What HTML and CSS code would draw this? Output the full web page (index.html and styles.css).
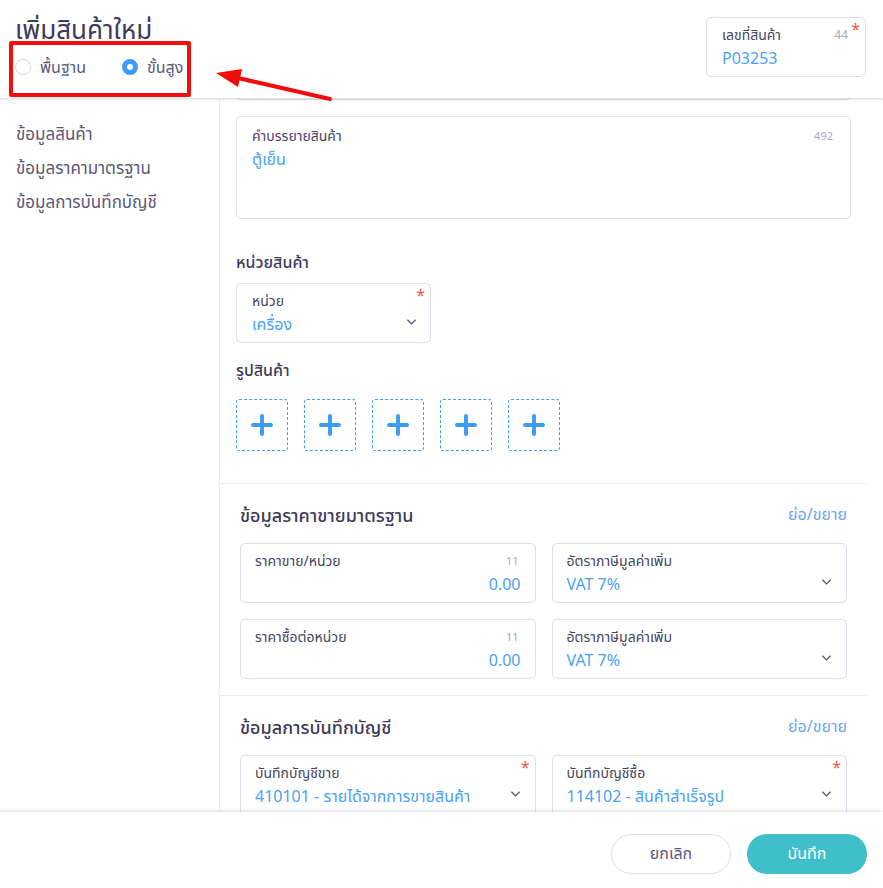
FILE: index.html
```html
<!DOCTYPE html>
<html lang="th">
<head>
<meta charset="utf-8">
<title>เพิ่มสินค้าใหม่</title>
<link rel="stylesheet" href="styles.css">
</head>
<body>
<div class="app">
  <header class="top">
    <div class="top-left">
      <h1 class="title">เพิ่มสินค้าใหม่</h1>
      <div class="radios">
        <label class="radio"><span class="dot"></span>พื้นฐาน</label>
        <label class="radio on"><span class="dot"></span>ขั้นสูง</label>
      </div>
    </div>
    <div class="field code-field">
      <div class="f-label">เลขที่สินค้า</div>
      <div class="f-value">P03253</div>
      <span class="count">44</span>
      <span class="req">*</span>
    </div>
  </header>

  <div class="body">
    <nav class="side">
      <a class="side-link">ข้อมูลสินค้า</a>
      <a class="side-link">ข้อมูลราคามาตรฐาน</a>
      <a class="side-link">ข้อมูลการบันทึกบัญชี</a>
    </nav>
    <main class="content">
      <div class="upper">
        <div class="field ghost"></div>
        <div class="field area">
          <div class="f-label">คำบรรยายสินค้า</div>
          <div class="f-value">ตู้เย็น</div>
          <span class="count">492</span>
        </div>
        <h3 class="sub unit-h">หน่วยสินค้า</h3>
        <div class="field select unit">
          <div class="f-label">หน่วย</div>
          <div class="f-value">เครื่อง</div>
          <span class="req">*</span>
          <svg class="chev" viewBox="0 0 12 8"><path d="M1.5 1.5 6 6l4.5-4.5"/></svg>
        </div>
        <h3 class="sub pic-h">รูปสินค้า</h3>
        <div class="pics">
          <div class="pic"><svg viewBox="0 0 24 24"><path d="M12 3v18M3 12h18"/></svg></div>
          <div class="pic"><svg viewBox="0 0 24 24"><path d="M12 3v18M3 12h18"/></svg></div>
          <div class="pic"><svg viewBox="0 0 24 24"><path d="M12 3v18M3 12h18"/></svg></div>
          <div class="pic"><svg viewBox="0 0 24 24"><path d="M12 3v18M3 12h18"/></svg></div>
          <div class="pic"><svg viewBox="0 0 24 24"><path d="M12 3v18M3 12h18"/></svg></div>
        </div>
      </div>

      <section class="sec">
        <div class="sec-head">
          <h2 class="sec-title">ข้อมูลราคาขายมาตรฐาน</h2>
          <a class="toggle">ย่อ/ขยาย</a>
        </div>
        <div class="grid">
          <div class="field">
            <div class="f-label">ราคาขาย/หน่วย</div>
            <div class="f-value num">0.00</div>
            <span class="count">11</span>
          </div>
          <div class="field select">
            <div class="f-label">อัตราภาษีมูลค่าเพิ่ม</div>
            <div class="f-value">VAT 7%</div>
            <svg class="chev" viewBox="0 0 12 8"><path d="M1.5 1.5 6 6l4.5-4.5"/></svg>
          </div>
          <div class="field">
            <div class="f-label">ราคาซื้อต่อหน่วย</div>
            <div class="f-value num">0.00</div>
            <span class="count">11</span>
          </div>
          <div class="field select">
            <div class="f-label">อัตราภาษีมูลค่าเพิ่ม</div>
            <div class="f-value">VAT 7%</div>
            <svg class="chev" viewBox="0 0 12 8"><path d="M1.5 1.5 6 6l4.5-4.5"/></svg>
          </div>
        </div>
      </section>

      <section class="sec">
        <div class="sec-head">
          <h2 class="sec-title">ข้อมูลการบันทึกบัญชี</h2>
          <a class="toggle">ย่อ/ขยาย</a>
        </div>
        <div class="grid">
          <div class="field select">
            <div class="f-label">บันทึกบัญชีขาย</div>
            <div class="f-value">410101 - รายได้จากการขายสินค้า</div>
            <span class="req">*</span>
            <svg class="chev" viewBox="0 0 12 8"><path d="M1.5 1.5 6 6l4.5-4.5"/></svg>
          </div>
          <div class="field select">
            <div class="f-label">บันทึกบัญชีซื้อ</div>
            <div class="f-value">114102 - สินค้าสำเร็จรูป</div>
            <span class="req">*</span>
            <svg class="chev" viewBox="0 0 12 8"><path d="M1.5 1.5 6 6l4.5-4.5"/></svg>
          </div>
        </div>
      </section>
    </main>
  </div>

  <footer class="foot">
    <button class="btn cancel">ยกเลิก</button>
    <button class="btn save">บันทึก</button>
  </footer>

  <div class="mark-box"></div>
  <svg class="mark-arrow" viewBox="0 0 140 40">
    <path class="shaft" d="M118 31 26 10"/>
    <path class="head" d="M4 5 30 1 26 19z"/>
  </svg>
</div>
</body>
</html>
```

FILE: styles.css
```css
* { box-sizing: border-box; }
html, body { margin: 0; padding: 0; }
body {
  width: 883px;
  height: 888px;
  overflow: hidden;
  background: #fff;
  font-family: "Noto Sans", "Noto Sans Thai", "DejaVu Sans", sans-serif;
  color: #4a4968;
}
.app {
  position: relative;
  width: 883px;
  height: 888px;
  display: flex;
  flex-direction: column;
}

/* header */
.top {
  height: 98px;
  flex: none;
  display: flex;
  justify-content: space-between;
  padding: 0 17px 0 15px;
  position: relative;
  z-index: 2;
  background: #fff;
  box-shadow: 0 1px 3px rgba(0,0,0,0.18);
}
.title {
  margin: 13px 0 0;
  font-size: 26px;
  line-height: 32px;
  font-weight: 400;
  color: #3c3b5a;
}
.radios {
  display: flex;
  gap: 36px;
  margin-top: 12px;
}
.radio {
  display: flex;
  align-items: center;
  gap: 9px;
  font-size: 16px;
  line-height: 20px;
  color: #5a5977;
}
.dot {
  width: 16px;
  height: 16px;
  border-radius: 50%;
  border: 1px solid #d6d5e3;
  background: #fff;
}
.radio.on .dot {
  border: 5px solid #3d9cf5;
}

/* fields */
.field {
  position: relative;
  border: 1px solid #dddce8;
  border-radius: 5px;
  background: #fff;
  padding: 8px 15px 0;
  height: 60px;
}
.f-label {
  font-size: 14px;
  line-height: 18px;
  color: #45445f;
}
.f-value {
  font-size: 16px;
  line-height: 22px;
  margin-top: 3px;
  color: #4a9ff5;
  white-space: nowrap;
}
.f-value.num { text-align: right; }
.count {
  position: absolute;
  right: 16px;
  top: 10px;
  font-size: 11px;
  line-height: 14px;
  color: #a9a9b9;
}
.req {
  position: absolute;
  right: 5px;
  top: 3px;
  font-size: 16px;
  line-height: 16px;
  color: #f05a3a;
}
.chev {
  position: absolute;
  right: 14px;
  top: 34px;
  width: 11px;
  height: 8px;
  fill: none;
  stroke: #55546f;
  stroke-width: 1.4;
}
.code-field {
  width: 160px;
  height: 60px;
  margin-top: 17px;
}
.code-field .count { right: 17px; top: 10px; font-size: 12px; }

/* body */
.body {
  flex: 1;
  display: flex;
  min-height: 0;
}
.side {
  width: 220px;
  flex: none;
  border-right: 1px solid #ececf2;
  padding: 25px 0 0 16px;
  display: flex;
  flex-direction: column;
  gap: 12px;
}
.side-link {
  font-size: 17px;
  line-height: 22px;
  color: #5a5977;
}
.content {
  width: 647px;
  flex: none;
  overflow: hidden;
}
.upper {
  padding: 0 16px 32px;
}
.ghost {
  margin-top: -58px;
  height: 60px;
}
.area {
  margin-top: 16px;
  height: 103px;
  padding-top: 10px;
}
.area .count { top: 12px; right: 17px; }
.sub {
  margin: 0;
  font-size: 16px;
  line-height: 22px;
  font-weight: 500;
  color: #3c3b5a;
}
.unit-h { margin-top: 32px; }
.unit { width: 195px; margin-top: 10px; }
.unit .chev { right: 13px; }
.pic-h { margin-top: 16px; }
.pics {
  display: flex;
  gap: 16px;
  margin-top: 18px;
}
.pic {
  width: 52px;
  height: 52px;
  border: 1px dashed #3d9cf5;
  border-radius: 3px;
  display: flex;
  align-items: center;
  justify-content: center;
}
.pic svg {
  width: 24px;
  height: 24px;
  fill: none;
  stroke: #3d9cf5;
  stroke-width: 4;
  stroke-linecap: round;
}

/* sections */
.sec {
  border-top: 1px solid #e9e9ef;
  padding: 19px 20px 16px;
}
.sec-head {
  display: flex;
  justify-content: space-between;
  align-items: center;
  height: 24px;
}
.sec-title {
  margin: 0;
  font-size: 18px;
  line-height: 24px;
  font-weight: 500;
  color: #3c3b5a;
}
.toggle {
  font-size: 16px;
  color: #6aa6f0;
}
.grid {
  margin-top: 16px;
  display: grid;
  grid-template-columns: 1fr 1fr;
  gap: 16px;
}
.grid .field { padding-left: 14px; padding-right: 14px; }

/* footer */
.foot {
  height: 76px;
  flex: none;
  display: flex;
  justify-content: flex-end;
  align-items: flex-start;
  gap: 16px;
  padding: 22px 16px 0 0;
  background: #fff;
  box-shadow: 0 -1px 3px rgba(0,0,0,0.15);
  position: relative;
  z-index: 2;
}
.btn {
  width: 120px;
  height: 40px;
  border-radius: 20px;
  font-family: inherit;
  font-size: 16px;
  cursor: pointer;
}
.cancel {
  background: #fff;
  border: 1px solid #dddce8;
  color: #5a5977;
}
.save {
  background: #40bfcb;
  border: none;
  color: #fff;
}

/* annotation overlay */
.mark-box {
  position: absolute;
  left: 9px;
  top: 41px;
  width: 182px;
  height: 56px;
  border: 4px solid #f20c0c;
  border-radius: 2px;
  z-index: 5;
}
.mark-arrow {
  position: absolute;
  left: 212px;
  top: 68px;
  width: 140px;
  height: 40px;
  z-index: 5;
  overflow: visible;
}
.mark-arrow .shaft {
  stroke: #f20c0c;
  stroke-width: 4;
  stroke-linecap: round;
  fill: none;
}
.mark-arrow .head { fill: #f20c0c; }
```
